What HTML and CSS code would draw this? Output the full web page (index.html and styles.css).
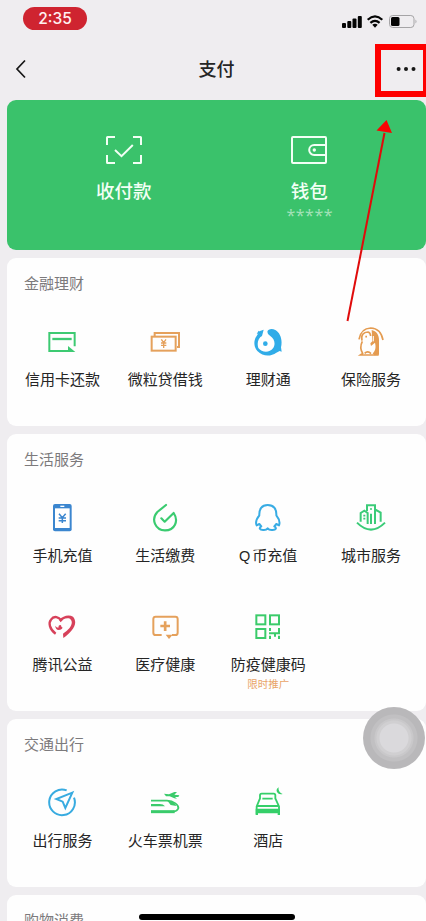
FILE: index.html
```html
<!DOCTYPE html>
<html lang="zh-CN">
<head>
<meta charset="utf-8">
<title>支付</title>
<link rel="stylesheet" href="styles.css">
</head>
<body>
<div class="screen">
  <div class="status">
    <span class="time">2:35</span>
    <svg class="status-icons" viewBox="0 0 78 16">
      <g fill="#050505"><rect x="1" y="9" width="4" height="5" rx="1"/><rect x="6.3" y="7" width="4" height="7" rx="1"/><rect x="11.5" y="4.5" width="4" height="9.500" rx="1"/><rect x="16.800" y="2" width="4" height="12" rx="1"/></g>
      <g fill="none" stroke="#050505" stroke-width="2.200"><path d="M26.700 5.700Q34 -.8 41.300 5.700M29.400 8.800Q34 4.800 38.600 8.800"/></g>
      <path d="M31.300 10.700Q34 8.700 36.700 10.700L34 13.700Z" fill="#050505"/>
      <rect x="48.500" y="1.500" width="24.500" height="12" rx="3.200" fill="none" stroke="#a5a4a6"/>
      <rect x="50" y="3" width="8.500" height="9" rx="1.500" fill="#050505"/>
      <path d="M74.500 5.500Q76.500 7.500 74.500 9.500Z" fill="#a5a4a6"/>
    </svg>
  </div>
  <div class="navbar">
    <svg class="back" viewBox="0 0 12 20"><path d="M10 1.500L2 10L10 18.500" fill="none" stroke="#161616" stroke-width="1.700"/></svg>
    <h1>支付</h1>
    <svg class="more" viewBox="0 0 20 6"><g fill="#161616"><circle cx="2.600" cy="3" r="2"/><circle cx="10" cy="3" r="2"/><circle cx="17.500" cy="3" r="2"/></g></svg>
  </div>

  <section class="hero">
    <div class="hero-item">
      <svg viewBox="0 0 40 32" fill="none" stroke="#f2fff5" stroke-width="2"><path d="M3 11V3.500Q3 3 3.500 3H11M29 3H36.500Q37 3 37 3.500V11M37 21V28.500Q37 29 36.500 29H29M11 29H3.500Q3 29 3 28.500V21M11 16L17.500 22.200L28.800 11"/></svg>
      <span class="hero-label">收付款</span>
    </div>
    <div class="hero-item">
      <svg viewBox="0 0 40 32" fill="none" stroke="#f2fff5" stroke-width="2"><rect x="3" y="3" width="34" height="26" rx="1"/><path d="M37 11H25.200A5 5 0 0 0 25.200 21H37"/><circle cx="25.300" cy="16" r="1.700" fill="#f2fff5" stroke="none"/></svg>
      <span class="hero-label">钱包</span>
      <span class="mask">*****</span>
    </div>
  </section>

  <section class="card">
    <h2>金融理财</h2>
    <div class="grid">
      <div class="item"><svg viewBox="0 0 96 96" fill="none" stroke="#3dca72" stroke-width="6"><path d="M86 61V21H10V75H70"/><path d="M19 39H77" stroke-width="7"/><path d="M66 60L88 78H66Z" fill="#3dca72" stroke="none"/></svg><span>信用卡还款</span></div>
      <div class="item"><svg viewBox="0 0 96 96" fill="none" stroke="#e5a15c" stroke-width="6"><rect x="8" y="32" width="72" height="42"/><path d="M17 30V21H90V63H84"/><path d="M37 40L44 50L51 40M44 50V66M36 51H52M36 58H52" stroke-width="4"/></svg><span>微粒贷借钱</span></div>
      <div class="item"><svg viewBox="0 0 96 96" fill="#30ace8"><path d="M35 11L24 15L18 23L14 30C4 43 5 63 16 75C33 92 56 92 73 80L83 75L89 77L87 64C92 43 86 21 70 12C60 7 48 9 46 17Q46 24 54 29C69 39 71 55 63 67C53 81 29 80 19 66C14 50 19 36 30 30Z"/><path d="M20 14L14 24L28 20Z"/><circle cx="40" cy="53" r="7"/></svg><span>理财通</span></div>
      <div class="item"><svg viewBox="0 0 96 96" fill="none" stroke="#e49b50" stroke-width="5"><path d="M12 40Q18 7 47 6Q77 7 84 42"/><path d="M21 44C17 28 25 18 39 18Q46 20 47 30"/><path d="M22 46C15 60 18 74 23 82L16 87H71"/><path d="M50 12L56 14C69 19 73 32 72 50V86L58 88L53 82C64 72 62 60 60 50L48 60L46 52L52 46Z" fill="#e49b50" stroke="none"/><path d="M55 30V46" stroke="#fefefe" stroke-width="3"/><path d="M31 32H36M29 82Q38 73 48 83"/></svg><span>保险服务</span></div>
    </div>
  </section>

  <section class="card">
    <h2>生活服务</h2>
    <div class="grid">
      <div class="item"><svg viewBox="0 0 96 96"><rect x="21" y="6" width="56" height="82" rx="6" fill="#3b86cf"/><path d="M27 19H71V78H27Z" fill="#fff"/><path d="M43 13H55" stroke="#fff" stroke-width="4"/><path d="M39 35L49 47L59 35M49 47V63M38 48H60M38 56H60" fill="none" stroke="#3b86cf" stroke-width="4.500"/></svg><span>手机充值</span></div>
      <div class="item"><svg viewBox="0 0 96 96" fill="none" stroke="#3acb70" stroke-width="6.500" stroke-linecap="round" stroke-linejoin="round"><path d="M51 9L25 30C5 52 19 85 48 85C77 85 90 57 74 33L47 59L37 49"/></svg><span>生活缴费</span></div>
      <div class="item"><svg viewBox="0 0 96 96" fill="none" stroke="#38ace4" stroke-width="6" stroke-linejoin="round" stroke-linecap="round"><path d="M47 9C29 9 21 22 22 40C14 50 10 62 14 70L22 66L28 73C20 78 23 84 33 84Q43 85 47 79Q51 85 62 84C72 84 75 78 67 73L73 66L81 70C85 60 81 50 73 40C74 22 66 9 47 9Z"/></svg><span><span class="latin">Q</span>币充值</span></div>
      <div class="item"><svg viewBox="0 0 96 96" fill="none" stroke="#3bcb78" stroke-width="6"><path d="M6 62Q48 104 90 62"/><path d="M17 59V33L28 26L38 33V66M36 27V10H60V66M48 66V35M60 22L77 32V59"/><path d="M45 21H51M25 41H31M25 50H31" stroke-width="5"/></svg><span>城市服务</span></div>
      <div class="item"><svg viewBox="0 0 96 96"><path d="M29 68C10 55 7 35 15 26C25 12 38 19 47 29" fill="none" stroke="#d7415a" stroke-width="7"/><path d="M39 27C51 13 70 10 81 17C98 37 80 62 52 81L51 68C73 54 85 35 72 23C61 19 50 24 44 34Z" fill="#d7415a"/><path d="M28 44Q28 56 38 57Q48 57 50 49Q46 51 45 43Q37 40 37 50Q31 50 28 44Z" fill="#d7415a"/></svg><span>腾讯公益</span></div>
      <div class="item"><svg viewBox="0 0 96 96" fill="none" stroke="#e5a15c" stroke-width="6"><path d="M38 72H20Q13 72 13 65V24Q13 17 20 17H79Q86 17 86 24V65Q86 72 79 72H69"/><path d="M34 45H63M48.500 31V60" stroke-width="8"/><path d="M50 71L71 71L60 84Z" fill="#e5a15c" stroke="none"/></svg><span>医疗健康</span></div>
      <div class="item"><svg viewBox="0 0 96 96" fill="none" stroke="#3bcb6a" stroke-width="6"><rect x="13" y="13" width="27" height="27"/><rect x="54" y="13" width="27" height="27"/><rect x="13" y="54" width="27" height="27"/><path d="M54 51V60M51 67H84M81 51V67M54 74V84M69 67V77M81 74V84"/></svg><span>防疫健康码</span><small>限时推广</small></div>
    </div>
  </section>

  <section class="card">
    <h2>交通出行</h2>
    <div class="grid">
      <div class="item"><svg viewBox="0 0 96 96" fill="none" stroke="#38abe0" stroke-width="6"><path d="M62 10A38.500 38.500 0 1 0 84 32"/><path d="M79 17L31 36L50 44L58 63Z" stroke-linejoin="miter"/></svg><span>出行服务</span></div>
      <div class="item"><svg viewBox="0 0 96 96" fill="none" stroke="#3acb6b" stroke-width="5.500"><path d="M6 41H54C74 41 90 55 88 64Q85 73 72 74"/><path d="M6 74H77" stroke-width="9"/><path d="M6 51H32Q43 51 48 58H6Z" fill="#3acb6b" stroke="none"/><path d="M54 40Q76 44 82 57L65 54Z" fill="#3acb6b" stroke="none"/><path d="M45 20L60 22L76 15L84 15L76 23L91 25L88 30H78L84 35L76 34L62 28H51Z" fill="#3acb6b" stroke="none"/></svg><span>火车票机票</span></div>
      <div class="item"><svg viewBox="0 0 96 96" fill="none" stroke="#35cf69" stroke-width="5.500"><path d="M24 37V25Q24 20 29 20H65Q70 20 70 25V37M24 34L14 58V82M70 34L81 58V82M31 35H62M16 57H78"/><path d="M11 65H84V84H77V79H18V84H11Z" fill="#35cf69" stroke="none"/><path d="M80 1C67 9 76 25 92 21C84 18 78 11 80 1Z" fill="#35cf69" stroke="none"/></svg><span>酒店</span></div>
    </div>
  </section>

  <section class="card">
    <h2>购物消费</h2>
  </section>

  <div class="home-bar"></div>
  <div class="touch"></div>
  <div class="highlight"></div>
  <svg class="arrow" viewBox="0 0 60 210"><path d="M7.500 206L44.500 18" stroke="#e00b0b" stroke-width="2"/><path d="M46.500 5L36.500 15.500L52 18Z" fill="#fb0303"/></svg>
</div>
</body>
</html>
```
FILE: styles.css
```css
* { box-sizing: border-box; }
body {
  margin: 0;
  background: #efedf0;
  font-family: "Liberation Sans", "Noto Sans CJK SC", sans-serif;
  color: #252525;
}
.screen {
  position: relative;
  height: 921px;
  overflow: hidden;
  padding-left: 7px;
  display: flex;
  flex-direction: column;
  gap: 8px;
}
.screen > * { flex-shrink: 0; }
svg { display: block; }
.status {
  height: 36px;
  padding: 7px 7px 0 16px;
  display: flex;
  justify-content: space-between;
  align-items: flex-start;
}
.time {
  width: 64px;
  height: 23px;
  border-radius: 12px;
  background: #cf2430;
  color: #fff0f0;
  font: 500 15.5px/23px Inter, sans-serif;
  text-align: center;
}
.status-icons { width: 78px; height: 16px; margin-top: 7px; }
.navbar {
  height: 48px;
  padding: 2px 10px 0 8px;
  display: grid;
  grid-template-columns: 1fr auto 1fr;
  align-items: center;
}
.back { width: 12px; height: 20px; }
.more { width: 20px; height: 6px; justify-self: end; }
h1 { margin: 0; padding: 2px 0 0 2px; font-size: 18px; font-weight: 500; line-height: 24px; }
.hero {
  height: 150px;
  padding: 34px 24px 0;
  border-radius: 9px;
  background: #3ac26b;
  color: #f2fff5;
  display: grid;
  grid-template-columns: 1fr 1fr;
}
.hero-item { display: flex; flex-direction: column; align-items: center; }
.hero-item svg { width: 40px; height: 32px; }
.hero-label { margin-top: 14px; font-size: 18.5px; font-weight: 500; line-height: 24px; }
.mask {
  margin-top: 1px;
  padding-left: 1px;
  font: 16px/20px "Noto Sans", sans-serif;
  letter-spacing: 0.5px;
  color: #a1e1b7;
}
.card {
  padding: 16px 4px 36px;
  border-radius: 9px;
  background: #fefefe;
}
h2 {
  margin: 0 0 32px 13px;
  font-size: 15px;
  font-weight: 400;
  line-height: 20px;
  color: #7c7a7c;
}
.grid {
  display: grid;
  grid-template-columns: repeat(4, 102.9px);
  grid-auto-rows: 64px;
  row-gap: 45px;
}
.item {
  display: flex;
  flex-direction: column;
  align-items: center;
  font-size: 15px;
  line-height: 20px;
  white-space: nowrap;
}
.item svg { width: 32px; height: 32px; flex: none; margin-bottom: 12px; }
.item small { font-size: 10.5px; line-height: 18px; color: #e9a468; }
.latin { font-size: 14.5px; margin-right: 2px; }
.home-bar {
  position: absolute;
  left: 139px;
  top: 914px;
  width: 156px;
  height: 6px;
  border-radius: 3px;
  background: #000;
}
.touch {
  position: absolute;
  left: 363px;
  top: 707px;
  width: 62px;
  height: 62px;
  border-radius: 50%;
  background: radial-gradient(circle, #dad9dc 0 14px, #d0cfd1 15px 17px, #c9c8ca 18px 19px, #c1c0c2 20px 23px, #b9b8ba 24px);
}
.highlight {
  position: absolute;
  left: 375px;
  top: 44px;
  width: 54px;
  height: 53px;
  border: 6px solid #fe0000;
}
.arrow { position: absolute; left: 340px; top: 115px; width: 60px; height: 210px; }
```
